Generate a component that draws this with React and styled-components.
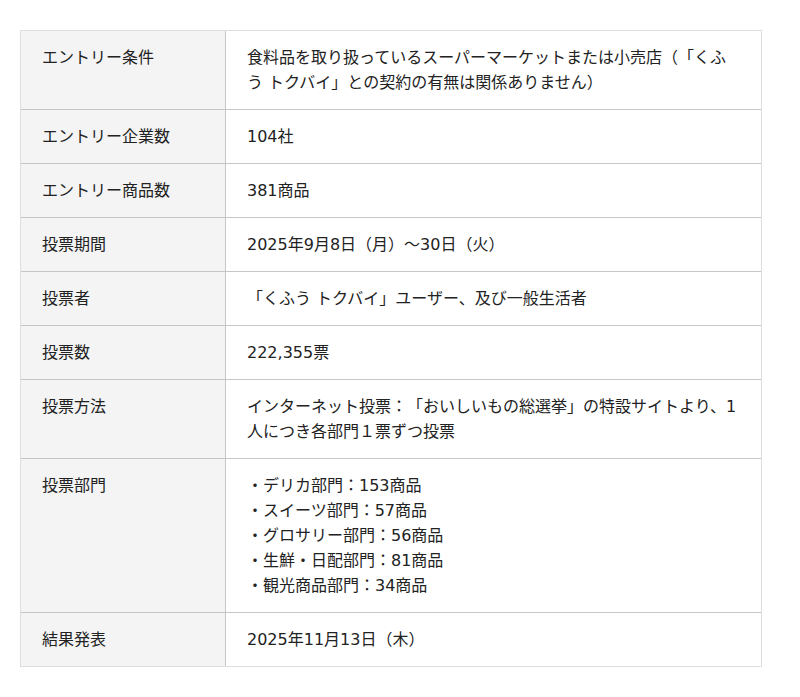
import React from "react";
import styled, { createGlobalStyle } from "styled-components";

const Global = createGlobalStyle`
  html, body { margin: 0; padding: 0; background: #fff; }
  body {
    font-family: "DejaVu Sans", "Noto Sans CJK JP", sans-serif;
    color: #222;
    text-spacing-trim: space-all;
  }
`;

const Wrap = styled.div`
  padding: 30px 20px;
  width: 742px;
`;

const Table = styled.table`
  width: 742px;
  border-collapse: separate;
  border-spacing: 0;
  border: 1px solid #dedede;
  font-size: 16px;
  line-height: 25px;
  text-spacing-trim: space-all;
`;

const Row = styled.tr`
  & + tr > th,
  & + tr > td {
    border-top: 1px solid #c6c6c6;
  }
`;

const Label = styled.th`
  width: 162px;
  background: #f4f4f4;
  font-weight: normal;
  text-align: left;
  vertical-align: top;
  padding: 14px 21px 14px 21px;
  border-right: 1px solid #c6c6c6;
`;

const Value = styled.td`
  text-align: left;
  vertical-align: top;
  padding: 14px 21px;
`;

const List = styled.ul`
  list-style: none;
  margin: 0;
  padding: 0;
`;

const rows = [
  ["エントリー条件", "食料品を取り扱っているスーパーマーケットまたは小売店（「くふう トクバイ」との契約の有無は関係ありません）"],
  ["エントリー企業数", "104社"],
  ["エントリー商品数", "381商品"],
  ["投票期間", "2025年9月8日（月）～30日（火）"],
  ["投票者", "「くふう トクバイ」ユーザー、及び一般生活者"],
  ["投票数", "222,355票"],
  ["投票方法", "インターネット投票：「おいしいもの総選挙」の特設サイトより、1人につき各部門１票ずつ投票"],
  [
    "投票部門",
    [
      "・デリカ部門：153商品",
      "・スイーツ部門：57商品",
      "・グロサリー部門：56商品",
      "・生鮮・日配部門：81商品",
      "・観光商品部門：34商品",
    ],
  ],
  ["結果発表", "2025年11月13日（木）"],
];

export default function App() {
  return (
    <>
      <Global />
      <Wrap>
        <Table>
          <tbody>
            {rows.map(([k, v]) => (
              <Row key={k}>
                <Label>{k}</Label>
                <Value>
                  {Array.isArray(v) ? (
                    <List>
                      {v.map((item) => (
                        <li key={item}>{item}</li>
                      ))}
                    </List>
                  ) : (
                    v
                  )}
                </Value>
              </Row>
            ))}
          </tbody>
        </Table>
      </Wrap>
    </>
  );
}
